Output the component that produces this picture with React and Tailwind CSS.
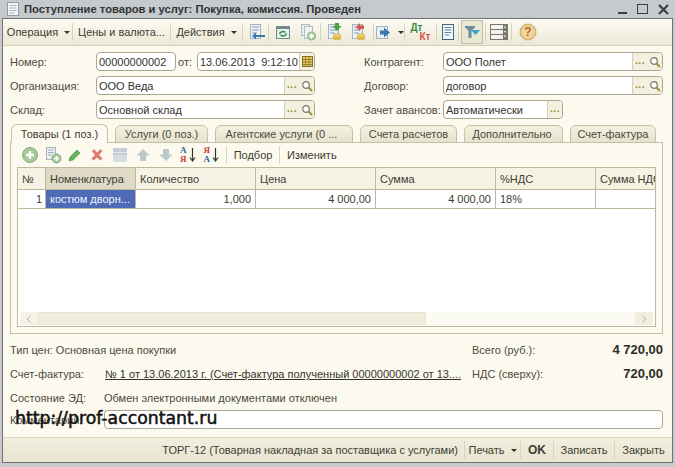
const Sep = ({ className = 'h-[18px]' }) => <div className={`w-px shrink-0 bg-[#d8d3bd] ${className}`} />

function Doc() {
  return <rect x="4.500" y="2.500" width="10" height="14" fill="#eef3f8" stroke="#a3b2bf" />
}

function Lines() {
  return <path d="M6 5h7M6 8h7M6 11h5" stroke="#7f9ab3" strokeWidth="1" fill="none" />
}

function Coins() {
  return (
    <g>
      <ellipse cx="13" cy="16" rx="4" ry="1.800" fill="#e3bb4c" stroke="#c09a35" strokeWidth=".5" />
      <ellipse cx="13" cy="13.500" rx="4" ry="1.800" fill="#f0d06a" stroke="#c09a35" strokeWidth=".5" />
    </g>
  )
}

function Icon({ children, size = 20 }) {
  return <svg width={size} height={size} viewBox={`0 0 ${size} ${size}`}>{children}</svg>
}

const topIcons = {
  back: <Icon><Doc /><Lines /><path d="M19 13H10V10.500L6 14l4 3.500V15h9z" fill="#3a79ad" /></Icon>,
  refresh: <Icon><rect x="3.500" y="4.500" width="13" height="12" fill="#e6eeee" stroke="#76888c" /><rect x="4" y="5" width="12" height="2" fill="#76888c" /><path d="M6.500 12a3.500 3 0 0 1 6-1.500M13.500 11.500a3.500 3 0 0 1-6 1.500" fill="none" stroke="#3c9149" strokeWidth="1.500" /></Icon>,
  copy: <Icon><rect x="3.500" y="2.500" width="8" height="11" fill="#e8edf0" stroke="#b4bdc2" /><rect x="6.500" y="4.500" width="8" height="12" fill="#f0f3f4" stroke="#b4bdc2" /><circle cx="13.500" cy="14" r="4" fill="#b3d6a9" stroke="#86b07e" /><path d="M13.500 11.500v5M11 14h5" stroke="#fff" strokeWidth="1.400" /></Icon>,
  post: <Icon><Doc /><Lines /><path d="M11 1h4v3h2.500L13 9 8.500 4H11z" fill="#4b9f47" /><Coins /></Icon>,
  unpost: <Icon><Doc /><Lines /><path d="M8 5l4-4v2.500h4V7h-4v2.500z" fill="#d35a4e" /><Coins /></Icon>,
  go: <Icon size={18}><rect x="2.500" y="3.500" width="11" height="12" fill="#e7eef5" stroke="#a3b2bf" /><path d="M6 7.500h4V4.500l6 5-6 5V11.500H6z" fill="#3a79ad" /></Icon>,
  list: <Icon size={18}><rect x="3.500" y="1.500" width="11" height="15" fill="#f4f7f9" stroke="#3d6583" /><path d="M5.500 4.500h7M5.500 7h7M5.500 9.500h7M5.500 12h5" stroke="#6689a3" /></Icon>,
  filter: <Icon size={18}><path d="M2 3h10v1.500L8.500 7.500V15h-3V7.500L2 4.500z" fill="#6d8f9c" /><path d="M8 7h9l-4.500 5z" fill="#36a8c7" /></Icon>,
  columns: <Icon><rect x="1.500" y="2.500" width="17" height="15" fill="#f4f4ef" stroke="#77776e" /><path d="M1.500 7.500h17M1.500 12.500h17" stroke="#77776e" /><rect x="14" y="3" width="4" height="14" fill="#77776e" /><path d="M16 4l1.300 1.800h-2.600zM14.700 9h2.600L16 10.800zM14.700 13.500h2.600L16 15.300z" fill="#fff" /></Icon>,
  help: <Icon><circle cx="10" cy="10" r="8" fill="#efcb88" stroke="#c9ab74" /><circle cx="10" cy="10" r="5.800" fill="#f4d79e" /><text x="10" y="14" textAnchor="middle" fontSize="12" fontWeight="700" fill="#ad6a2c" fontFamily="Liberation Sans">?</text></Icon>,
}

function Caret() {
  return <span className="ml-[6px] inline-block border-x-[3px] border-t-[3px] border-x-transparent border-t-[#33332d]" />
}

function MenuItem({ children, caret, className }) {
  return (
    <div className={`flex h-full shrink-0 items-center justify-center whitespace-nowrap ${className}`}>
      {children}
      {caret && <Caret />}
    </div>
  )
}

function TopToolbar() {
  return (
    <div className="flex h-[27px] shrink-0 items-center border-b border-[#d5d0b8] bg-gradient-to-b from-[#fdfbf3] to-[#ece8d6] pl-[2px] text-[#3d3d33]">
      <MenuItem caret className="w-[67px]">Операция</MenuItem>
      <Sep />
      <MenuItem className="w-[97px]">Цены и валюта...</MenuItem>
      <Sep />
      <MenuItem caret className="w-[71px]">Действия</MenuItem>
      <Sep />
      <MenuItem className="w-[25px]">{topIcons.back}</MenuItem>
      <Sep />
      <MenuItem className="w-[27px]">{topIcons.refresh}</MenuItem>
      <MenuItem className="w-[24px]">{topIcons.copy}</MenuItem>
      <Sep />
      <MenuItem className="w-[25px]">{topIcons.post}</MenuItem>
      <MenuItem className="w-[27px] pr-[4px]">{topIcons.unpost}</MenuItem>
      <Sep />
      <MenuItem caret className="w-[30px]">{topIcons.go}</MenuItem>
      <Sep />
      <MenuItem className="w-[31px]">
        <span className="flex w-[20px] flex-col text-[10px] leading-[9px] font-bold">
          <span className="text-[#3b8a3f]">Дт</span>
          <span className="self-end text-[#d9534d]">Кт</span>
        </span>
      </MenuItem>
      <Sep />
      <MenuItem className="w-[21px]">{topIcons.list}</MenuItem>
      <Sep />
      <div className="mx-[2px] flex h-[24px] w-[22px] shrink-0 items-center justify-center border border-[#c2bea6] bg-[#e9e6d4]">{topIcons.filter}</div>
      <Sep />
      <MenuItem className="w-[25px]">{topIcons.columns}</MenuItem>
      <Sep />
      <MenuItem className="w-[32px]">{topIcons.help}</MenuItem>
    </div>
  )
}

function Dots() {
  return (
    <div className="flex h-full w-[15px] shrink-0 items-end justify-center border-l border-[#d5d0b8] bg-[#f4f0e0] pb-[4px] text-[10px] leading-none font-bold tracking-[0.5px] text-[#9a8a3a]">...</div>
  )
}

function Lens() {
  return (
    <div className="flex h-full w-[15px] shrink-0 items-center justify-center bg-[#f4f0e0]">
      <svg width="12" height="12" viewBox="0 0 12 12"><circle cx="5" cy="5" r="3.300" fill="#fff" stroke="#77756a" strokeWidth="1.200" /><path d="M7.500 7.500L11 11" stroke="#a08838" strokeWidth="1.800" /></svg>
    </div>
  )
}

function Field({ value, className, children }) {
  return (
    <div className={`flex h-[19px] shrink-0 items-center overflow-hidden rounded-[4px] border border-[#aaa68f] bg-white ${className}`}>
      <span className="min-w-0 flex-1 overflow-hidden pl-[2px] whitespace-pre text-[#33332d]">{value}</span>
      {children}
    </div>
  )
}

function Label({ children, className = 'w-[86px]' }) {
  return <span className={`shrink-0 whitespace-nowrap text-[#4b4b40] ${className}`}>{children}</span>
}

function HeaderForm() {
  return (
    <div className="flex shrink-0 pt-[6px] pl-[7px]">
      <div className="flex w-[354px] flex-col gap-[5px]">
        <div className="flex items-center">
          <Label>Номер:</Label>
          <Field value="00000000002" className="w-[80px]" />
          <span className="w-[21px] shrink-0 pl-[2px] text-[#4b4b40]">от:</span>
          <Field value="13.06.2013  9:12:10" className="w-[118px]">
            <div className="flex h-full w-[15px] items-center justify-center border-l border-[#d5d0b8] bg-[#f4f0e0]">
              <svg width="11" height="11" viewBox="0 0 11 11"><rect x=".5" y=".5" width="10" height="10" fill="#e9cb6a" stroke="#85701f" /><path d="M0 3.500h11M0 6h11M0 8.500h11M3.500 0v11M7 0v11" stroke="#85701f" strokeWidth=".8" /></svg>
            </div>
          </Field>
        </div>
        <div className="flex items-center">
          <Label>Организация:</Label>
          <Field value="ООО Веда" className="w-[219px]"><Dots /><Lens /></Field>
        </div>
        <div className="flex items-center">
          <Label>Склад:</Label>
          <Field value="Основной склад" className="w-[219px]"><Dots /><Lens /></Field>
        </div>
      </div>
      <div className="flex flex-col gap-[5px]">
        <div className="flex items-center">
          <Label className="w-[79px]">Контрагент:</Label>
          <Field value="ООО Полет" className="w-[220px]"><Dots /><Lens /></Field>
        </div>
        <div className="flex items-center">
          <Label className="w-[79px]">Договор:</Label>
          <Field value="договор" className="w-[220px]"><Dots /><Lens /></Field>
        </div>
        <div className="flex items-center">
          <Label className="w-[79px]">Зачет авансов:</Label>
          <Field value="Автоматически" className="w-[120px]"><Dots /></Field>
        </div>
      </div>
    </div>
  )
}

const tabs = [
  { label: 'Услуги (0 поз.)', w: 'w-[93px]' },
  { label: 'Агентские услуги (0 ...', w: 'w-[138px] pr-[5px]' },
  { label: 'Счета расчетов', w: 'w-[97px]' },
  { label: 'Дополнительно', w: 'w-[99px] pr-[3px]' },
  { label: 'Счет-фактура', w: 'w-[86px]' },
]

function Tabs() {
  return (
    <div className="relative z-10 -mb-px flex h-[19px] shrink-0 items-end gap-[7px] pl-[1px]">
      <div className="flex h-[19px] w-[97px] items-center justify-center rounded-t-[6px] border border-b-0 border-[#c5c1a6] bg-[#fcf9ee] text-[#3d3d33]">Товары (1 поз.)</div>
      {tabs.map(t => (
        <div key={t.label} className={`flex h-[18px] items-center justify-center rounded-t-[6px] border border-[#c5c1a6] bg-gradient-to-b from-[#f4f1e2] to-[#e6e2cd] whitespace-nowrap text-[#4b4b40] ${t.w}`}>{t.label}</div>
      ))}
    </div>
  )
}

const rowIcons = [
  <Icon size={18}><circle cx="9" cy="9" r="7.500" fill="#a6cb99" stroke="#86ab7e" /><path d="M9 5v8M5 9h8" stroke="#fff" strokeWidth="2.400" /></Icon>,
  <Icon size={18}><rect x="2.500" y="1.500" width="9" height="12" fill="#eef1f3" stroke="#a9b3b8" /><path d="M4 4h6M4 6.500h6M4 9h4" stroke="#9fb0bb" /><circle cx="12.500" cy="12.500" r="4.500" fill="#a6cb99" stroke="#7fa877" /><path d="M12.500 10v5M10 12.500h5" stroke="#fff" strokeWidth="1.500" /></Icon>,
  <Icon size={18}><path d="M4 11l7-7 3 3-7 7-4 1z" fill="#67b355" stroke="#468f3c" strokeWidth=".6" /></Icon>,
  <Icon size={18}><path d="M4 5l2-2 3 3.500L12.500 3l2 2L11 9l3.500 3.500-2 2L9 11.500 5.500 14.500l-2-2L7 9z" fill="#e27a6d" /></Icon>,
  <Icon size={18}><rect x="2" y="2" width="14" height="14" fill="#c4cdd3" /><rect x="2" y="9" width="14" height="7" fill="#d6dce0" /><rect x="2" y="6" width="14" height="1" fill="#e7ebed" /></Icon>,
  <Icon size={18}><path d="M9 3l6.500 6.500H12V15H6V9.500H2.500z" fill="#bcc7c9" /></Icon>,
  <Icon size={18}><path d="M6 3h6v5.500h3.500L9 15 2.500 8.500H6z" fill="#bcc7c9" /></Icon>,
]

function SortIcon({ top, bottom, topColor, bottomColor }) {
  return (
    <div className="flex w-[18px] items-center">
      <span className="flex flex-col text-[9px] leading-[9px] font-bold [font-family:'Liberation_Serif',serif]">
        <span className={topColor}>{top}</span>
        <span className={bottomColor}>{bottom}</span>
      </span>
      <svg width="7" height="16" viewBox="0 0 7 16" className="ml-[2px]"><path d="M3.500 1v12M1 10.500l2.500 3.500 2.500-3.500" fill="none" stroke="#33332d" strokeWidth="1.200" /></svg>
    </div>
  )
}

function RowToolbar() {
  return (
    <div className="flex h-[24px] shrink-0 items-center pl-[7px] text-[#3d3d33]">
      <div className="flex w-[23px] justify-center">{rowIcons[0]}</div>
      <div className="flex w-[23px] justify-center">{rowIcons[1]}</div>
      <div className="flex w-[22px] justify-center">{rowIcons[2]}</div>
      <div className="flex w-[22px] justify-center">{rowIcons[3]}</div>
      <div className="flex w-[23px] justify-center">{rowIcons[4]}</div>
      <div className="flex w-[23px] justify-center">{rowIcons[5]}</div>
      <div className="flex w-[23px] justify-center">{rowIcons[6]}</div>
      <div className="flex w-[24px] justify-center"><SortIcon top="А" bottom="Я" topColor="text-[#2c5f9e]" bottomColor="text-[#c8403a]" /></div>
      <div className="flex w-[23px] justify-center"><SortIcon top="Я" bottom="А" topColor="text-[#c8403a]" bottomColor="text-[#2c5f9e]" /></div>
      <Sep className="ml-[2px] h-[18px]" />
      <div className="w-[52px] text-center">Подбор</div>
      <Sep />
      <div className="pl-[7px]">Изменить</div>
    </div>
  )
}

const columns = [
  { title: '№', w: 'w-[28px]', value: '1', cell: 'justify-end pr-[3px]' },
  { title: 'Номенклатура', w: 'w-[90px]', value: 'костюм дворн...', cell: 'bg-[#4f6bb8] text-[#f2f2ff] pl-[4px]', head: 'bg-[#dedac5]' },
  { title: 'Количество', w: 'w-[120px]', value: '1,000', cell: 'justify-end pr-[4px]' },
  { title: 'Цена', w: 'w-[120px]', value: '4 000,00', cell: 'justify-end pr-[4px]' },
  { title: 'Сумма', w: 'w-[120px]', value: '4 000,00', cell: 'justify-end pr-[4px]' },
  { title: '%НДС', w: 'w-[100px]', value: '18%', cell: 'pl-[4px]' },
  { title: 'Сумма НДС', w: 'w-[61px]', value: '', cell: '' },
]

function Grid() {
  return (
    <div className="mx-[6px] flex min-h-0 flex-1 flex-col overflow-hidden border border-[#bdb99c] bg-white text-[#3d3d33]">
      <div className="flex h-[22px] shrink-0 bg-[#f6f3e4]">
        {columns.map(c => (
          <div key={c.title} className={`flex shrink-0 items-center overflow-hidden border-r border-b border-[#bdb99c] pl-[4px] whitespace-nowrap ${c.w} ${c.head ?? ''}`}>{c.title}</div>
        ))}
      </div>
      <div className="flex h-[19px] shrink-0">
        {columns.map(c => (
          <div key={c.title} className={`flex shrink-0 items-center overflow-hidden border-r border-b border-[#bdb99c] whitespace-nowrap ${c.w} ${c.cell}`}>{c.value}</div>
        ))}
      </div>
      <div className="flex-1" />
      <div className="mb-[1px] flex h-[13px] shrink-0 items-center px-[2px]">
        <div className="flex h-full w-[18px] items-center justify-center bg-[#f4f2e6]">
          <svg width="6" height="8" viewBox="0 0 6 8"><path d="M5 .5L1 4l4 3.500" fill="none" stroke="#b7b4a5" /></svg>
        </div>
        <div className="h-full w-[388px] border border-[#e7e4d3] bg-[#f1eedf]" />
        <div className="h-full flex-1 bg-[#fbfaf3]" />
        <div className="flex h-full w-[18px] items-center justify-center bg-[#f1eedf]">
          <svg width="6" height="8" viewBox="0 0 6 8"><path d="M1 .5L5 4 1 7.500" fill="none" stroke="#b7b4a5" /></svg>
        </div>
      </div>
    </div>
  )
}

function Footer() {
  return (
    <div className="flex h-[25px] shrink-0 items-center justify-end border-t border-[#dcd8c2] bg-gradient-to-b from-[#f1eede] to-[#e9e5d2] text-[#3d3d33]">
      <span className="pr-[6px] whitespace-nowrap">ТОРГ-12 (Товарная накладная за поставщика с услугами)</span>
      <Sep />
      <div className="flex w-[55px] items-center justify-center">Печать<Caret /></div>
      <Sep />
      <div className="w-[32px] text-center text-[12px] font-bold">OK</div>
      <Sep />
      <div className="w-[60px] text-center">Записать</div>
      <Sep />
      <div className="w-[57px] text-center">Закрыть</div>
    </div>
  )
}

export default function App() {
  return (
    <div className="relative flex h-[467px] w-[675px] flex-col overflow-hidden bg-[#c6cacc] text-[11px] leading-[14px] [font-family:'Liberation_Sans',Arial,sans-serif]">
      <div className="flex h-[18px] shrink-0 items-center pl-[7px] text-[#2f3335]">
        <svg width="12" height="14" viewBox="0 0 12 14"><rect x=".5" y=".5" width="11" height="13" fill="#f5f6f7" stroke="#8f9ca5" /><path d="M2.500 3.500h7M2.500 6h7M2.500 8.500h7M2.500 11h5" stroke="#a9b5bd" /></svg>
        <span className="ml-[5px] text-[11.2px] font-bold whitespace-nowrap">Поступление товаров и услуг: Покупка, комиссия. Проведен</span>
        <div className="ml-auto flex items-center pr-[6px] text-[#3b3f41]">
          <span className="mt-[8px] h-[2px] w-[9px] bg-[#3b3f41]" />
          <span className="ml-[10px] h-[10px] w-[11px] border border-[#3b3f41]" />
          <svg width="11" height="11" viewBox="0 0 11 11" className="ml-[10px]"><path d="M1 1l9 9M10 1l-9 9" stroke="#3b3f41" strokeWidth="2.200" /></svg>
        </div>
      </div>
      <div className="mx-[2px] mb-[4px] flex min-h-0 flex-1 flex-col border border-[#6f7274] bg-[#fcf9ee]">
        <TopToolbar />
        <HeaderForm />
        <div className="mx-[7px] mt-[5px] mr-[9px] flex h-[210px] shrink-0 flex-col">
          <Tabs />
          <div className="flex min-h-0 flex-1 flex-col border border-[#c5c1a6] pb-[6px]">
            <RowToolbar />
            <Grid />
          </div>
        </div>
        <div className="flex min-h-0 flex-1 flex-col pt-[9px] pr-[9px] pl-[7px] text-[#4b4b40]">
          <div className="flex h-[24px] items-start justify-between">
            <span>Тип цен: Основная цена покупки</span>
            <div className="flex w-[191px] justify-between">
              <span>Всего (руб.):</span>
              <span className="text-[13px] font-bold text-[#2c2c26]">4 720,00</span>
            </div>
          </div>
          <div className="flex h-[24px] items-start justify-between">
            <div className="flex">
              <span className="w-[95px]">Счет-фактура:</span>
              <span className="whitespace-nowrap text-[#33332d] underline">№ 1 от 13.06.2013 г. (Счет-фактура полученный 00000000002 от 13....</span>
            </div>
            <div className="flex w-[191px] justify-between">
              <span>НДС (сверху):</span>
              <span className="text-[13px] font-bold text-[#2c2c26]">720,00</span>
            </div>
          </div>
          <div className="flex h-[19px]">
            <span className="w-[94px]">Состояние ЭД:</span>
            <span>Обмен электронными документами отключен</span>
          </div>
          <div className="flex items-center">
            <span className="w-[94px]">Комментарий:</span>
            <div className="h-[19px] flex-1 rounded-[4px] border border-[#aaa68f] bg-white" />
          </div>
        </div>
        <Footer />
      </div>
      <div className="absolute top-[408px] left-[15px] text-[17.3px] leading-[20px] text-[#111] [-webkit-text-stroke:0.5px_#111] [font-family:'DejaVu_Sans',sans-serif]">http://prof-accontant.ru</div>
    </div>
  )
}
